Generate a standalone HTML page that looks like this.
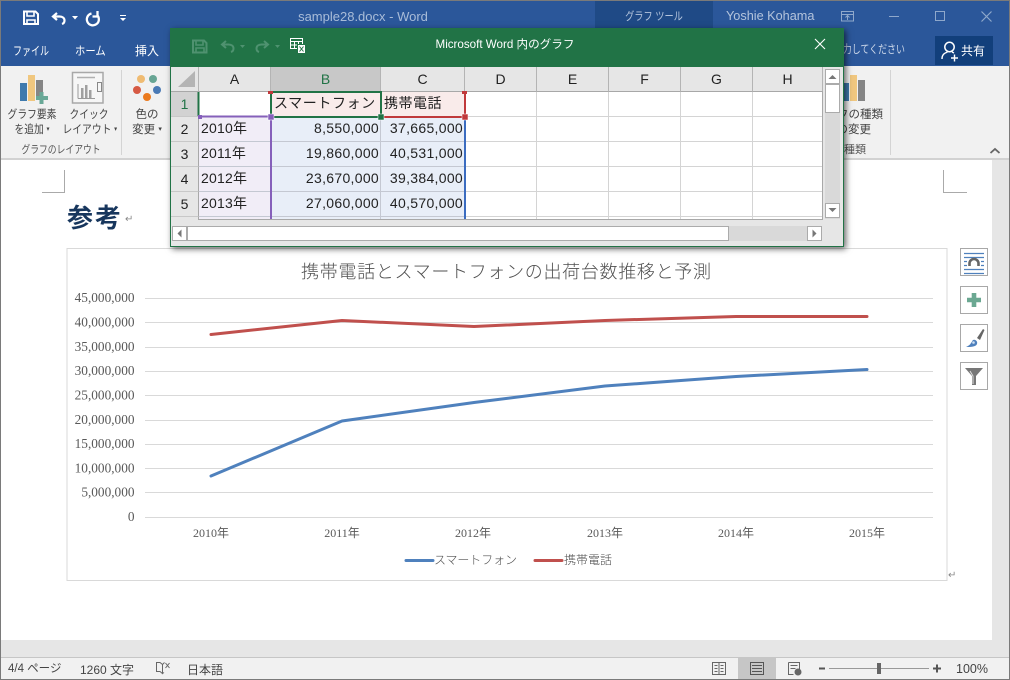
<!DOCTYPE html>
<html lang="ja"><head><meta charset="utf-8"><title>sample28.docx - Word</title>
<style>
html,body{margin:0;padding:0;width:1010px;height:680px;overflow:hidden;background:#e6e6e6}
body{position:relative;font-family:"Liberation Sans","Noto Sans CJK JP",sans-serif;color:#444}
.a{position:absolute}
.t{position:absolute;white-space:nowrap;line-height:1}
.c{text-align:center}
.n{transform:scaleX(.85)}
.cell{position:absolute;white-space:nowrap;font-size:14px;line-height:25px;height:25px;color:#222;letter-spacing:.2px}
.colh{position:absolute;top:67px;height:24px;background:#e6e6e6;border-right:1px solid #b4b4b4;border-bottom:1px solid #a8a8a8;text-align:center;font-size:14px;line-height:24px;color:#222}
.rowh{position:absolute;left:171px;width:27px;height:24px;background:#e6e6e6;border-bottom:1px solid #c8c8c8;border-right:1px solid #a8a8a8;text-align:center;font-size:14px;line-height:24px;color:#222}
.side{position:absolute;left:960px;width:26px;height:26px;border:1px solid #a8a8a8;background:#fff}
</style></head><body>
<!-- title bar -->
<div class="a" style="left:0;top:0;width:1010px;height:66px;background:#2b579a"></div>
<div class="a" style="left:595px;top:1px;width:118px;height:27px;background:#1f4a86"></div>
<div class="a" style="left:0;top:0;width:1010px;height:1px;background:#7a7a7a"></div>
<svg class="a" style="left:0;top:0" width="170" height="30">
<path d="M24 11.500h11.500l2.500 2.500v10h-14z" fill="none" stroke="#fff" stroke-width="2"/><path d="M27 11v5h7v-5M27 24v-4h8v4" fill="none" stroke="#fff" stroke-width="1.600"/>
<path d="M57 13l-4 3.500 4 3.500M53.500 16.500h6c3 0 5 1.500 5 4 0 2-1 3-2.500 3.500" fill="none" stroke="#fff" stroke-width="2.200"/>
<path d="M72 16l6 0-3 3.500z" fill="#fff"/>
<path d="M91.500 13.500a6 6 0 1 0 5.500 1.500M97.500 11v5.500h-5" fill="none" stroke="#fff" stroke-width="2.300"/>
<path d="M120 15h6v1h-6zM120 18h6l-3 3z" fill="#fff"/>
</svg>
<div class="t c" style="left:268px;width:190px;top:10px;font-size:13px;color:#a9bcd8">sample28.docx - Word</div>
<div class="t c" style="left:595px;width:118px;top:12px;font-size:11.500px;color:#b4c4dc;transform:scaleX(.8)">グラフ ツール</div>
<div class="t" style="left:726px;top:10px;font-size:12.700px;color:#b4c4dc">Yoshie Kohama</div>
<svg class="a" style="left:830px;top:0" width="180" height="30">
<path d="M11.500 11.500h12v9.500h-12zM11.500 14.500h12M17.500 20v-4M15.500 17.500l2-2 2 2" fill="none" stroke="#8fa8cb"/>
<path d="M59 16.500h10" stroke="#8fa8cb"/>
<path d="M105.500 11.500h9v9h-9z" fill="none" stroke="#8fa8cb"/>
<path d="M151.500 11.500l10 10M161.500 11.500l-10 10" stroke="#8fa8cb" stroke-width="1.200"/>
</svg>
<div class="t" style="left:13px;top:44.500px;font-size:12px;color:#fff;transform:scaleX(.75);transform-origin:left">ファイル</div>
<div class="t" style="left:75px;top:44.500px;font-size:12px;color:#fff;transform:scaleX(.86);transform-origin:left">ホーム</div>
<div class="t" style="left:135px;top:44.500px;font-size:12px;color:#fff">挿入</div>
<div class="t" style="left:700px;width:205px;text-align:right;top:44.500px;font-size:11.500px;color:#c9d5e8;transform:scaleX(.78);transform-origin:right">実行したい作業を入力してください</div>
<div class="a" style="left:935px;top:36px;width:58px;height:29px;background:#123f7b"></div>
<svg class="a" style="left:935px;top:36px" width="30" height="29"><circle cx="14.500" cy="11" r="4.700" fill="none" stroke="#fff" stroke-width="1.500"/><path d="M7 23c0-5 3-6 5.500-7M17 16l2 1M16 22h7M19.500 18.500v7" fill="none" stroke="#fff" stroke-width="1.400"/></svg>
<div class="t" style="left:961px;top:44.500px;font-size:12px;color:#fff">共有</div>

<!-- ribbon -->
<div class="a" style="left:1px;top:66px;width:1008px;height:92px;background:#f1f1f1"></div>
<div class="a" style="left:1px;top:158px;width:1008px;height:2px;background:#d2d2d2"></div>
<svg class="a" style="left:0;top:66px" width="170" height="80">
<rect x="20" y="17" width="7" height="18" fill="#3f7aad"/><rect x="28" y="9" width="7" height="26" fill="#f0c77f"/><rect x="36" y="14" width="7" height="17" fill="#858585"/>
<path d="M41.500 26v12M36 32h12" stroke="#69a897" stroke-width="4"/>
<rect x="72.500" y="6.500" width="30.500" height="30.500" fill="#f6f6f6" stroke="#a8a8a8" stroke-width="1.500"/>
<path d="M77 11.500h18" stroke="#b0b0b0" stroke-width="1.500"/><path d="M78 32.500h17M78 18v14.500" stroke="#9a9a9a" fill="none"/><path d="M81 32v-10h2.500v10zM85 32v-13h2.500v13zM89 32v-8h2.500v8z" fill="#a0a0a0"/><rect x="97.500" y="16.500" width="4" height="9" fill="none" stroke="#888"/>
<circle cx="141" cy="13" r="4" fill="#efbb72"/><circle cx="153" cy="13" r="4" fill="#68a594"/><circle cx="137" cy="24" r="4" fill="#d65a44"/><circle cx="157" cy="24" r="4" fill="#4a7ab5"/><circle cx="147" cy="31" r="4" fill="#eb7a1e"/>
</svg>
<div class="t c n" style="left:1px;width:62px;top:110px;font-size:11.500px">グラフ要素</div>
<div class="t c n" style="left:1px;width:62px;top:125px;font-size:11.500px">を追加 <span style="font-size:7px;vertical-align:2px">▾</span></div>
<div class="t c n" style="left:59px;width:60px;top:110px;font-size:11.500px">クイック</div>
<div class="t c n" style="left:58px;width:60px;top:125px;font-size:11.500px">レイアウト <span style="font-size:7px;vertical-align:2px">▾</span></div>
<div class="t c" style="left:122px;width:50px;top:110px;font-size:11.500px">色の</div>
<div class="t c" style="left:122px;width:50px;top:125px;font-size:11.500px">変更 <span style="font-size:7px;vertical-align:2px">▾</span></div>
<div class="t c" style="left:11px;width:100px;top:145px;font-size:11px;color:#555;transform:scaleX(.8)">グラフのレイアウト</div>
<div class="a" style="left:121px;top:70px;width:1px;height:85px;background:#d4d4d4"></div>
<div class="a" style="left:890px;top:70px;width:1px;height:85px;background:#d4d4d4"></div>
<svg class="a" style="left:840px;top:70px" width="60" height="35"><rect x="4" y="13" width="5" height="18" fill="#3f7aad"/><rect x="10" y="5" width="7" height="26" fill="#f0c77f"/><rect x="18" y="10" width="7" height="21" fill="#858585"/></svg>
<div class="t" style="left:700px;width:183px;text-align:right;top:110px;font-size:11.500px">グラフの種類</div>
<div class="t" style="left:700px;width:171px;text-align:right;top:125px;font-size:11.500px">の変更</div>
<div class="t" style="left:700px;width:166px;text-align:right;top:145px;font-size:11px;color:#555">グラフの種類</div>
<svg class="a" style="left:985px;top:143px" width="20" height="14"><path d="M5.500 10l4.500-4 4.500 4" fill="none" stroke="#666" stroke-width="1.800"/></svg>

<!-- page -->
<div class="a" style="left:1px;top:160px;width:991px;height:480px;background:#fff"></div>
<div class="a" style="left:42px;top:170px;width:22px;height:22px;border-right:1px solid #aaa;border-bottom:1px solid #aaa"></div>
<div class="a" style="left:943px;top:170px;width:23px;height:22px;border-left:1px solid #aaa;border-bottom:1px solid #aaa"></div>
<div class="t" style="left:67px;top:205px;font-size:26px;font-weight:700;color:#17365d;letter-spacing:2px">参考</div>
<div class="t" style="left:125px;top:215px;font-size:10px;color:#888">↵</div>

<!-- chart -->
<svg class="a" style="left:0;top:0;font-family:'Liberation Serif','Noto Sans CJK JP',serif" width="1010" height="680">
<rect x="67" y="248.500" width="880" height="332" fill="#fff" stroke="#d9d9d9"/>
<g stroke="#d9d9d9" stroke-width="1">
<path d="M145 298.500H933M145 322.500H933M145 347.500H933M145 371.500H933M145 395.500H933M145 420.500H933M145 444.500H933M145 468.500H933M145 492.500H933M145 517.500H933"/>
</g>
<g font-size="13.300" fill="#595959" text-anchor="end">
<text x="134.500" y="302">45,000,000</text><text x="134.500" y="326.500">40,000,000</text><text x="134.500" y="351">35,000,000</text><text x="134.500" y="375">30,000,000</text><text x="134.500" y="399.500">25,000,000</text><text x="134.500" y="424">20,000,000</text><text x="134.500" y="448">15,000,000</text><text x="134.500" y="472.500">10,000,000</text><text x="134.500" y="496.500">5,000,000</text><text x="134.500" y="521">0</text>
</g>
<g font-size="12" fill="#595959" text-anchor="middle">
<text x="211" y="537">2010年</text><text x="342" y="537">2011年</text><text x="473" y="537">2012年</text><text x="605" y="537">2013年</text><text x="736" y="537">2014年</text><text x="867" y="537">2015年</text>
</g>
<text x="506" y="278" font-size="18" fill="#4f4f4f" text-anchor="middle" font-weight="300" font-family="'Noto Sans CJK JP',sans-serif" textLength="410" lengthAdjust="spacing">携帯電話とスマートフォンの出荷台数推移と予測</text>
<polyline points="211,476 342,421 474,402.500 605,386 736,376.500 867,369.500" fill="none" stroke="#4f81bd" stroke-width="3" stroke-linejoin="round" stroke-linecap="round"/>
<polyline points="211,334.500 342,320.500 474,326.500 605,320.500 736,316.500 867,316.500" fill="none" stroke="#c0504d" stroke-width="3" stroke-linejoin="round" stroke-linecap="round"/>
<path d="M406 560.500h27" stroke="#4f81bd" stroke-width="3" stroke-linecap="round"/>
<path d="M535 560.500h27" stroke="#c0504d" stroke-width="3" stroke-linecap="round"/>
<g font-size="12" fill="#4f4f4f" font-family="'Noto Sans CJK JP',sans-serif" font-weight="300">
<text x="434" y="564" textLength="83" lengthAdjust="spacing">スマートフォン</text><text x="564" y="564">携帯電話</text>
</g>
<text x="948" y="578" font-size="10" fill="#888" font-family="'Liberation Sans',sans-serif">↵</text>
</svg>

<!-- side buttons -->
<div class="side" style="top:248px"><svg width="26" height="26" style="display:block"><path d="M3 4.500h20M3 8.500h20M3 20.500h20M3 24.500h20M3 12.500h3M20 12.500h3M3 16.500h3M20 16.500h3" stroke="#4f81bd" stroke-width="1.200"/><path d="M8.500 17v-2.500a4.500 4.500 0 0 1 9 0v2.500" fill="none" stroke="#666" stroke-width="2.600"/></svg></div>
<div class="side" style="top:286px"><svg width="26" height="26" style="display:block"><path d="M13 6v14M6 13h14" stroke="#6ba892" stroke-width="4.600"/></svg></div>
<div class="side" style="top:324px"><svg width="26" height="26" style="display:block"><path d="M16 13l6-9 1.500 1-4.500 10z" fill="#666"/><path d="M5 22c4 0 10 0 11-3 1-3-2-5-4-4-1 1-1 2-2 3-1 2-3 3-5 4z" fill="#4f81bd"/><circle cx="12.500" cy="17.500" r="1.300" fill="#cfe0f2"/></svg></div>
<div class="side" style="top:362px"><svg width="26" height="26" style="display:block"><path d="M4 5h18l-7 8v9h-4v-9z" fill="#777"/><path d="M9 8l3 5v8" fill="none" stroke="#ddd"/></svg></div>

<!-- green dialog -->
<div class="a" style="left:170px;top:28px;width:674px;height:219px;background:#e6e6e6;box-shadow:2px 2px 6px rgba(0,0,0,.6)"></div>
<div class="a" style="left:170px;top:28px;width:674px;height:39px;background:#217346"></div>
<div class="a" style="left:170px;top:67px;width:1px;height:180px;background:#217346"></div>
<div class="a" style="left:843px;top:67px;width:1px;height:180px;background:#217346"></div>
<div class="a" style="left:170px;top:246px;width:674px;height:1px;background:#217346"></div>
<svg class="a" style="left:170px;top:28px" width="150" height="39">
<path d="M23 12.500h11l2.500 2.500v9.500h-13.500z" fill="none" stroke="#4f9270" stroke-width="2"/><path d="M26 12v5h7v-5M26 24v-4h8v4" fill="none" stroke="#4f9270" stroke-width="1.600"/>
<path d="M56 13l-4 3.500 4 3.500M52.500 16.500h6c3 0 5 1.500 5 4 0 2-1 3-2.500 3.500" fill="none" stroke="#4f9270" stroke-width="2"/><path d="M70 17h5l-2.500 3z" fill="#4f9270"/>
<path d="M94 13l4 3.500-4 3.500M97.500 16.500h-6c-3 0-5 1.500-5 4 0 2 1 3 2.500 3.500" fill="none" stroke="#4f9270" stroke-width="2"/><path d="M105 17h5l-2.500 3z" fill="#4f9270"/>
<path d="M120.500 10.500h12v10h-12zM120.500 13.500h12M120.500 17h12M124.500 13.500v7M128.500 13.500v7" fill="none" stroke="#fff"/><rect x="127.500" y="16.500" width="8" height="9" fill="#fff" stroke="#217346"/><path d="M129.500 18.500l4 5M133.500 18.500l-4 5" stroke="#217346"/>
</svg>
<div class="t c" style="left:380px;width:250px;top:38.500px;font-size:11.600px;color:#fff">Microsoft Word 内のグラフ</div>
<svg class="a" style="left:810px;top:36px" width="20" height="18"><path d="M5 3l10 10M15 3l-10 10" stroke="#fff" stroke-width="1.100"/></svg>

<!-- sheet -->
<div class="a" style="left:171px;top:67px;width:651px;height:153px;background:#fff"></div>
<div class="a" style="left:171px;top:67px;width:27px;height:24px;background:#e6e6e6;border-right:1px solid #b4b4b4;border-bottom:1px solid #a8a8a8"></div>
<svg class="a" style="left:171px;top:67px" width="27" height="24"><path d="M7 20L24 4v16z" fill="#b4b4b4"/></svg>
<div class="colh" style="left:199px;width:71px">A</div>
<div class="colh" style="left:271px;width:109px;background:#c8c8c8;color:#217346">B</div>
<div class="colh" style="left:381px;width:83px">C</div>
<div class="colh" style="left:465px;width:71px">D</div>
<div class="colh" style="left:537px;width:71px">E</div>
<div class="colh" style="left:609px;width:71px">F</div>
<div class="colh" style="left:681px;width:71px">G</div>
<div class="colh" style="left:753px;width:69px">H</div>
<div class="rowh" style="top:92px;background:#d2d2d2;color:#217346">1</div>
<div class="rowh" style="top:117px">2</div>
<div class="rowh" style="top:142px">3</div>
<div class="rowh" style="top:167px">4</div>
<div class="rowh" style="top:192px">5</div>
<div class="a" style="left:171px;top:217px;width:27px;height:3px;background:#e6e6e6;border-right:1px solid #a8a8a8"></div>
<!-- fills -->
<div class="a" style="left:199px;top:117px;width:71px;height:103px;background:#f1edf7"></div>
<div class="a" style="left:271px;top:117px;width:193px;height:103px;background:#e8eef8"></div>
<div class="a" style="left:271px;top:92px;width:193px;height:24px;background:#f9ebea"></div>
<svg class="a" style="left:0;top:0" width="1010" height="680">
<g stroke="#d4d4d4"><path d="M199 116.500H822M199 141.500H822M199 166.500H822M199 191.500H822M199 216.500H822"/><path d="M270.500 92V220M380.500 92V220M464.500 92V220M536.500 92V220M608.500 92V220M680.500 92V220M752.500 92V220"/></g>
<path d="M199 141.500H464M199 166.500H464M199 191.500H464M199 216.500H464M380.500 117V220" stroke="#c4c8d2"/>
<path d="M198.500 92v24" stroke="#217346" stroke-width="2"/>
<rect x="271" y="92" width="110" height="25" fill="none" stroke="#217346" stroke-width="2"/>
<path d="M381 117H465M465 92V117" stroke="#c0393b" stroke-width="2" fill="none"/>
<path d="M199 116.500H271M271 117V220" stroke="#8560ba" stroke-width="2"/>
<path d="M465 117V220" stroke="#3b6cc0" stroke-width="2"/>
<rect x="268" y="114" width="6" height="6" fill="#8560ba" stroke="#fff" stroke-width=".5"/>
<rect x="378" y="114" width="6" height="6" fill="#217346" stroke="#fff" stroke-width=".5"/>
<rect x="462" y="114" width="6" height="6" fill="#c0393b" stroke="#fff" stroke-width=".5"/>
<rect x="198" y="115" width="4" height="4" fill="#8560ba"/>
<rect x="268" y="91" width="5" height="3" fill="#c0393b"/>
<rect x="462" y="91" width="5" height="3" fill="#c0393b"/>
<path d="M198 219.500H822.500M822.500 91V220" stroke="#a8a8a8" fill="none"/>
</svg>
<div class="cell" style="left:274px;top:91px;letter-spacing:.6px">スマートフォン</div>
<div class="cell" style="left:384px;top:91px;letter-spacing:.5px">携帯電話</div>
<div class="cell" style="left:201px;top:116px">2010年</div>
<div class="cell" style="left:201px;top:141px">2011年</div>
<div class="cell" style="left:201px;top:166px">2012年</div>
<div class="cell" style="left:201px;top:191px">2013年</div>
<div class="cell" style="left:271px;width:108px;text-align:right;top:116px;letter-spacing:.3px">8,550,000</div>
<div class="cell" style="left:271px;width:108px;text-align:right;top:141px;letter-spacing:.3px">19,860,000</div>
<div class="cell" style="left:271px;width:108px;text-align:right;top:166px;letter-spacing:.3px">23,670,000</div>
<div class="cell" style="left:271px;width:108px;text-align:right;top:191px;letter-spacing:.3px">27,060,000</div>
<div class="cell" style="left:381px;width:82px;text-align:right;top:116px;letter-spacing:.3px">37,665,000</div>
<div class="cell" style="left:381px;width:82px;text-align:right;top:141px;letter-spacing:.3px">40,531,000</div>
<div class="cell" style="left:381px;width:82px;text-align:right;top:166px;letter-spacing:.3px">39,384,000</div>
<div class="cell" style="left:381px;width:82px;text-align:right;top:191px;letter-spacing:.3px">40,570,000</div>

<!-- scrollbars -->
<div class="a" style="left:825px;top:69px;width:15px;height:150px;background:#d9d9d9"></div>
<div class="a" style="left:172px;top:226px;width:650px;height:15px;background:#d9d9d9"></div>
<svg class="a" style="left:0;top:0" width="1010" height="680">
<rect x="825.500" y="69.500" width="14" height="14" fill="#fff" stroke="#ababab"/><path d="M828.500 79l4-4 4 4z" fill="#777"/>
<rect x="825.500" y="84.500" width="14" height="28" fill="#fff" stroke="#ababab"/>
<rect x="825.500" y="203.500" width="14" height="14" fill="#fff" stroke="#ababab"/><path d="M828.500 208l4 4 4-4z" fill="#777"/>
<rect x="172.500" y="226.500" width="14" height="14" fill="#fff" stroke="#ababab"/><path d="M181.500 229.500l-4 4 4 4z" fill="#777"/>
<rect x="187.500" y="226.500" width="541" height="14" fill="#fff" stroke="#ababab"/>
<rect x="807.500" y="226.500" width="14" height="14" fill="#fff" stroke="#ababab"/><path d="M812.500 229.500l4 4-4 4z" fill="#777"/>
</svg>

<!-- status bar -->
<div class="a" style="left:1px;top:640px;width:1008px;height:17px;background:#e6e6e6"></div>
<div class="a" style="left:1px;top:657px;width:1008px;height:22px;background:#f1f1f1;border-top:1px solid #c6c6c6;box-sizing:border-box"></div>
<div class="t" style="left:8px;top:664px;font-size:11.500px;color:#444">4/4 ページ</div>
<div class="t" style="left:80px;top:664px;font-size:12px;color:#444">1260 文字</div>
<svg class="a" style="left:150px;top:658px" width="30" height="20"><path d="M6.500 4.500h3.500l2.500 2v9l-2.500-2h-3.500zM12.500 6.500l2-2M12.500 15.500l-1.500-1M12.500 15.500l1.500-1" fill="none" stroke="#666"/><path d="M15.500 5l4 5M19.500 5l-4 5" stroke="#666"/></svg>
<div class="t" style="left:187px;top:664px;font-size:12px;color:#444">日本語</div>
<div class="a" style="left:738px;top:658px;width:38px;height:21px;background:#c6c6c6"></div>
<svg class="a" style="left:700px;top:658px" width="150" height="21">
<path d="M12.500 4.500h13v12h-13zM19 4.500v12M14.500 7.500h3M14.500 10.500h3M14.500 13.500h3M20.500 7.500h3M20.500 10.500h3M20.500 13.500h3" fill="none" stroke="#666"/>
<path d="M50.500 4.500h13v12h-13zM52 7.500h10M52 10.500h10M52 13.500h10" fill="none" stroke="#555"/>
<path d="M88.500 4.500h11v9M88.500 4.500v12h5M90.500 7.500h7M90.500 10.500h5" fill="none" stroke="#666"/><circle cx="98" cy="14" r="3.500" fill="#666"/>
</svg>
<svg class="a" style="left:810px;top:658px" width="140" height="21">
<path d="M9 10.500h6" stroke="#555" stroke-width="2"/><path d="M19 10.500h100" stroke="#999"/><rect x="67" y="5" width="4" height="11" fill="#666"/><path d="M123 10.500h8M127 6.500v8" stroke="#555" stroke-width="2"/>
</svg>
<div class="t" style="left:956px;top:663px;font-size:12.500px;color:#444">100%</div>
<!-- window border -->
<div class="a" style="left:0;top:0;width:1px;height:680px;background:#7a7a7a"></div>
<div class="a" style="left:1009px;top:0;width:1px;height:680px;background:#7a7a7a"></div>
<div class="a" style="left:0;top:679px;width:1010px;height:1px;background:#7a7a7a"></div>
</body></html>
